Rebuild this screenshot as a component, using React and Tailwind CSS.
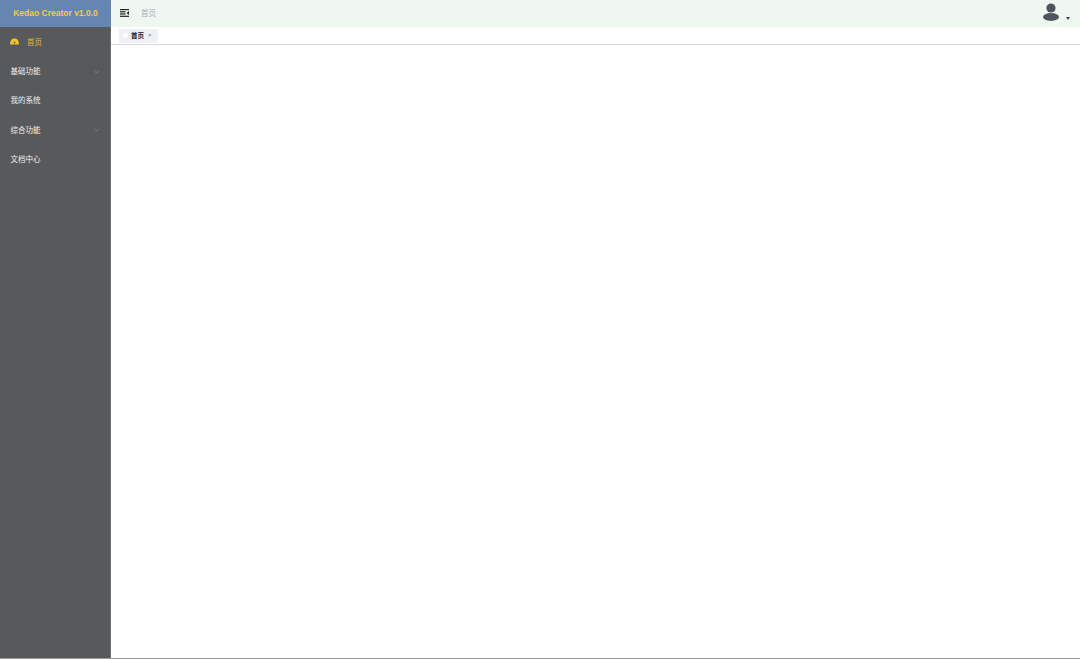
export default function App() {
  const F = "font-['Liberation_Sans','Noto_Sans_CJK_SC',sans-serif]";
  const items = [
    { t: "基础功能", c: true },
    { t: "我的系统" },
    { t: "综合功能", c: true },
    { t: "文档中心" },
  ];
  return (
    <div className={`flex h-[659px] w-[1080px] overflow-hidden border-b border-[#9a9a9a] bg-white ${F}`}>
      <aside className="flex w-[111px] shrink-0 flex-col bg-[#58595b]">
        <div className="flex h-[27px] shrink-0 items-center justify-center bg-[#6486b0] text-[8.5px] font-bold text-[#f8cb3a]">
          Kedao Creator v1.0.0
        </div>
        <nav className="flex flex-1 flex-col border-r border-[#6e6e6e] pt-[0.6px]">
          <div className="flex h-[29.4px] items-center pl-[10px] text-[7.5px] text-[#e0b93c]">
            <svg viewBox="0 0 10 8" className="mr-[8px] mb-[1px] h-[7px] w-[9px]" fill="#f2c230">
              <path d="M0 7 C0 2.5 2 0.5 5 0.5 S10 2.5 10 7 L10 7.5 L0 7.5 Z" />
              <circle cx="5" cy="5" r="1" fill="#58595b" />
            </svg>
            首页
          </div>
          {items.map((i) => (
            <div key={i.t} className="flex h-[29.4px] items-center justify-between pl-[10.5px] pr-[10px] text-[7.5px] text-[#f0f0f0]">
              <span>{i.t}</span>
              {i.c && (
                <svg viewBox="0 0 8 5" className="h-[4px] w-[7px]" fill="none" stroke="#8a8b8d" strokeWidth="0.9">
                  <path d="M1 1 L4 4 L7 1" />
                </svg>
              )}
            </div>
          ))}
        </nav>
      </aside>
      <main className="flex min-w-0 flex-1 flex-col">
        <header className="flex h-[27px] shrink-0 items-center justify-between bg-[#f0f6f0] pl-[9px] pr-[10px]">
          <div className="flex items-center">
            <svg viewBox="0 0 9 8" className="mb-[1px] h-[8px] w-[9px]" fill="#222">
              <rect x="0" y="0" width="9" height="1.2" />
              <rect x="0" y="2.2" width="5.5" height="1.2" />
              <rect x="0" y="4.4" width="5.5" height="1.2" />
              <rect x="0" y="6.7" width="9" height="1.2" />
              <path d="M9 2 L6.5 4 L9 6 Z" />
            </svg>
            <span className="ml-[12px] text-[7.5px] text-[#a3aeb8]">首页</span>
          </div>
          <div className="mb-[3px] flex items-end">
            <svg viewBox="0 0 18 18" className="h-[18px] w-[18px]" fill="#4e5560">
              <circle cx="9" cy="5" r="4.6" />
              <ellipse cx="9" cy="14" rx="8" ry="3.9" />
            </svg>
            <span className="mb-[1px] ml-[6px] h-0 w-0 border-x-[2px] border-t-[3px] border-x-transparent border-t-[#444]" />
          </div>
        </header>
        <div className="flex h-[18px] shrink-0 items-center border-b border-[#d8d8d8] pl-[8px]">
          <div className="flex h-[14px] w-[39px] items-center bg-[#eef0f4] pl-[4px] text-[6.5px] font-bold text-[#222]">
            <span className="mr-[3px] h-[5px] w-[5px] rounded-full bg-white" />
            首页
            <span className="ml-[4px] text-[6px] font-normal text-[#777]">×</span>
          </div>
        </div>
        <div className="flex-1 bg-white" />
      </main>
    </div>
  );
}
